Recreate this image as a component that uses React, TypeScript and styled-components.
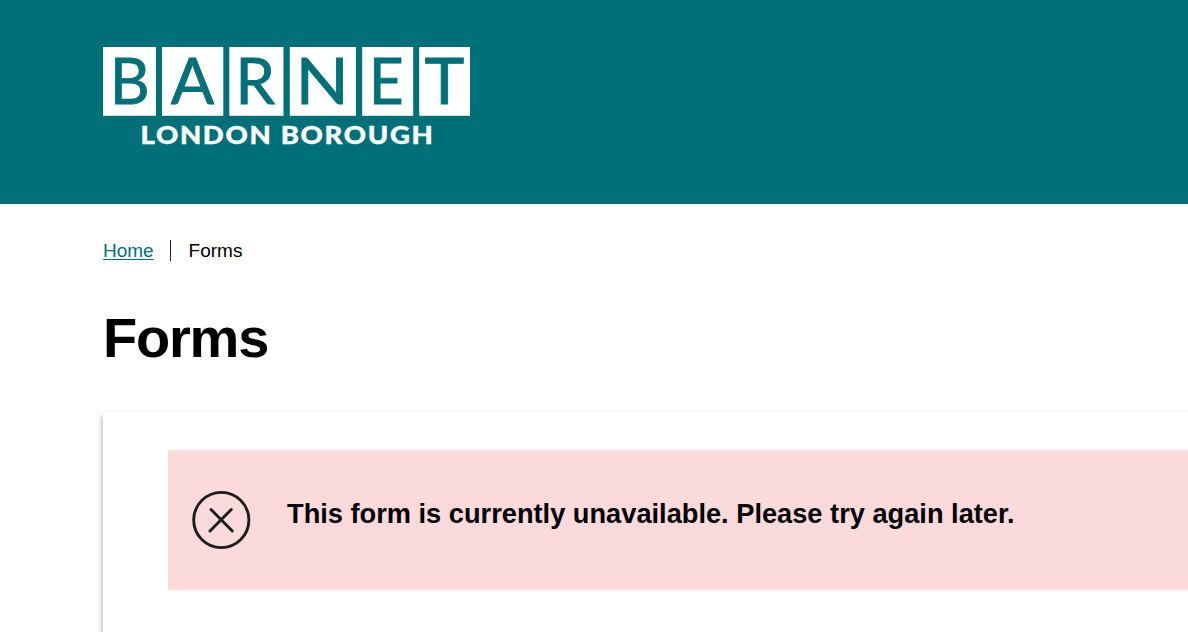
import React from 'react';
import styled, { createGlobalStyle } from 'styled-components';

type TilePropsType = {
    letter: string
    x: number
    width: number
    textX: number
    stretch: number
}

const tiles: TilePropsType[] = [
    { letter: 'B', x: 0, width: 53, textX: 26.6, stretch: 0.98 },
    { letter: 'A', x: 59, width: 61.3, textX: 89.6, stretch: 1.02 },
    { letter: 'R', x: 126.3, width: 54.2, textX: 152.3, stretch: 1.01 },
    { letter: 'N', x: 186.8, width: 66.2, textX: 219.3, stretch: 1.11 },
    { letter: 'E', x: 259.2, width: 51, textX: 283.2, stretch: 0.96 },
    { letter: 'T', x: 316.2, width: 50.8, textX: 341.4, stretch: 1.07 },
]

const LogoTile = (props: TilePropsType) => {
    return (
        <g>
            <rect x={props.x} y={0} width={props.width} height={68.8} fill="#fff"/>
            <TileLetter transform={`translate(${props.textX} 56.6) scale(${props.stretch} 1)`}>
                {props.letter}
            </TileLetter>
        </g>
    );
};

const App = () => {
    return (
        <>
            <GlobalStyle/>
            <Header>
                <Logo viewBox="0 0 368 102" role="img" aria-label="Barnet London Borough">
                    {tiles.map(tile => <LogoTile key={tile.letter} {...tile}/>)}
                    <LogoCaption x={37.5} y={97.4} textLength={294} lengthAdjust="spacingAndGlyphs">
                        LONDON BOROUGH
                    </LogoCaption>
                </Logo>
            </Header>
            <Main>
                <Breadcrumb>
                    <HomeLink href={'#'}>Home</HomeLink>
                    <Current>Forms</Current>
                </Breadcrumb>
                <Title>Forms</Title>
                <Card>
                    <Alert>
                        <AlertIcon viewBox="0 0 60 60">
                            <circle cx={30.3} cy={30} r={27.6}/>
                            <path d="M20 19.5 41.3 41M40.3 19.5 19 41"/>
                        </AlertIcon>
                        <AlertText>This form is currently unavailable. Please try again later.</AlertText>
                    </Alert>
                </Card>
            </Main>
        </>
    );
};

export default App;

const GlobalStyle = createGlobalStyle`
    * {
        box-sizing: border-box;
    }

    body {
        margin: 0;
        background-color: #fff;
        color: #000;
        font-family: "Liberation Sans", Arial, sans-serif;
    }
`
const Header = styled.header`
    height: 204px;
    padding: 47px 0 0 103px;
    background-color: #007078;
`
const Logo = styled.svg`
    display: block;
    width: 368px;
    height: 102px;
    overflow: visible;
`
const TileLetter = styled.text`
    font-family: Lato, sans-serif;
    font-size: 63px;
    text-anchor: middle;
    fill: #007078;
    stroke: #007078;
    stroke-width: 0.8;
`
const LogoCaption = styled.text`
    font-family: Lato, sans-serif;
    font-size: 24.5px;
    font-weight: 900;
    letter-spacing: 1.5px;
    fill: #fff;
    stroke: #fff;
    stroke-width: 0.4;
`
const Main = styled.main`
    height: 428px;
    padding: 36px 0 0 103px;
    overflow: hidden;
`
const Breadcrumb = styled.nav`
    display: flex;
    height: 21px;
    font-size: 19px;
    line-height: 21px;
`
const HomeLink = styled.a`
    width: 67px;
    color: #007078;
    text-underline-offset: 2px;
`
const Current = styled.span`
    padding-left: 17.6px;
    border-left: 1px solid #222;
`
const Title = styled.h1`
    margin: 45px 0 0;
    height: 106px;
    font-size: 56px;
    line-height: 64px;
    letter-spacing: -1.2px;
`
const Card = styled.section`
    height: 240px;
    margin-right: -20px;
    padding: 38px 0 0 65px;
    background-color: #fff;
    box-shadow: 0 4px 6px rgba(0, 0, 0, 0.4);
`
const Alert = styled.div`
    display: flex;
    height: 140px;
    padding: 40px 23px;
    background-color: #fbdadc;
`
const AlertIcon = styled.svg`
    flex: none;
    width: 60px;
    height: 60px;
    fill: none;
    stroke: #1d1d1b;
    stroke-width: 2.9;
    stroke-linecap: round;
`
const AlertText = styled.p`
    margin: 8px 0 0 36px;
    font-size: 27.22px;
    font-weight: 700;
    line-height: 32px;
    white-space: nowrap;
`
